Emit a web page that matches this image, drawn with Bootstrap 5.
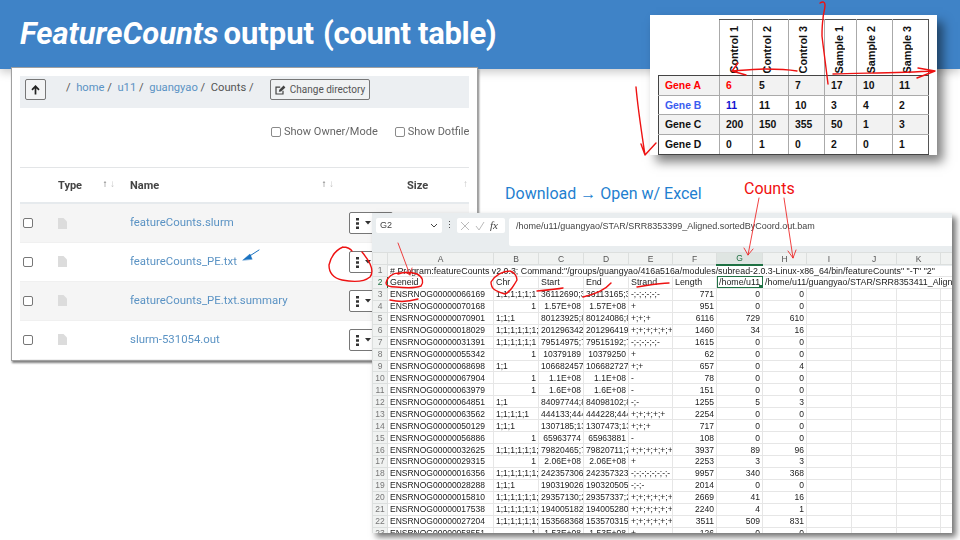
<!DOCTYPE html>
<html lang="en">
<head>
<meta charset="utf-8">
<title>FeatureCounts output</title>
<link href="https://cdn.jsdelivr.net/npm/bootstrap@5.3.0/dist/css/bootstrap.min.css" rel="stylesheet">
<style>
html,body{margin:0;background:#fff}
.slide{position:relative;width:960px;height:540px;overflow:hidden;background:#fff;font-family:"Liberation Sans",sans-serif}
.slide-head{height:69px;background:#3f83c7;box-shadow:0 3px 9px rgba(0,0,0,.22);padding:15px 0 0 20px;color:#fff;font:700 31px/38px Roboto,sans-serif;white-space:nowrap}
.slide-head em{margin-right:5px}
.slide-head span{margin-left:9px;letter-spacing:-.35px}

.files-win{position:absolute;left:11px;top:67px;width:467px;height:294px;background:#fff;border:1px solid #a0a0a0;box-shadow:1px 2px 2px #808080;padding:8px;font-family:Roboto,sans-serif;font-size:11px;color:#555;overflow:hidden}
.files-bar{height:32px;background:#eceff2;padding:3px 5px}
.up-btn{width:21px;height:21px;padding:0;border:1px solid #777;border-radius:2px;background:#f3f4f5;line-height:1}
.crumbs{margin:0 0 0 20px;padding:0;width:204px;font-size:11.2px;line-height:18px;color:#555}
.crumbs a{color:#5b93c4;text-decoration:none}
.dir-btn{width:100px;height:21px;padding:0;border:1px solid #777;border-radius:2px;background:#f0f2f3;color:#555;font-size:10px;line-height:19px;white-space:nowrap}
.opts{height:60px;padding:15px 0 0 251px;font-size:11px;line-height:18px;white-space:nowrap;overflow:hidden;border-bottom:1px solid #e3e5e7;color:#666}
.opts label{display:inline-flex;align-items:center;margin-right:17px}
.tick{width:10px;height:10px;border:1px solid #8a8a8a;border-radius:2px;background:#fff;margin:0 3px 0 0;appearance:none;flex:none;display:block}
.files-table{table-layout:fixed;width:449px;margin:0;font-size:11.4px;border-collapse:collapse}
.files-table th,.files-table td{padding:0 0 0 8px;vertical-align:middle;border:0;color:#555;box-shadow:none;background:transparent}
.files-table thead th{height:35px;padding-top:3px;border-bottom:2px solid #e6eaed;font-weight:700;font-size:11px;color:#444}
.files-table tbody tr{height:39px}
.files-table tbody tr.odd-row td{background:#f5f5f5}
.files-table tbody tr td{border-bottom:1px solid #f0f0f0}
.files-table td.tick-cell{padding-left:3px}
.files-table .tick{border:1.4px solid #777;margin:0}
.files-table a{color:#5b93c4;text-decoration:none}
.sorter{font-size:10px;line-height:1;color:#555;padding-right:7px;margin-top:-6px}
.sorter i{font-style:normal;color:#c4c4c4}
.size-sort{padding-right:1px}
.kebab{width:44px;height:22px;margin-top:1px;padding:0 0 0 6px;border:1px solid #777;border-radius:2px;background:#fff;display:flex;align-items:center;gap:6px;line-height:1}
.head-wrap{display:flex;justify-content:space-between;align-items:center}

.gene-win{position:absolute;left:650px;top:15px;width:287px;height:140px;background:#fff;box-shadow:6px 7px 10px rgba(0,0,0,.5);padding:4px 0 0 8px}
.gene-table{table-layout:fixed;width:270px;border-collapse:collapse;font:700 10.4px "Liberation Sans",sans-serif;color:#111}
.gene-table td,.gene-table th{border:1px solid #aaa;padding:0 0 0 6px;height:19.7px;vertical-align:middle;white-space:nowrap}
.gene-table th.rot{height:56px;padding:0;font-size:10.8px;font-weight:700;text-align:left;vertical-align:bottom;border-top:1px solid #555;border-bottom:1px solid #444}
.gene-table th.rot span{display:block;writing-mode:vertical-rl;transform:rotate(180deg);margin:0 0 2px 8px;text-align:left}
.gene-table tbody td:first-child{border-left:1px solid #444;padding-left:6px}
.gene-table tbody td:nth-child(2),.gene-table tbody td:nth-child(5){border-left:1px solid #444}
.gene-table tbody td:last-child,.gene-table th.rot:last-child{border-right:1px solid #555}
.gene-table th.rot:first-of-type,.gene-table th.rot.mid{border-left:1px solid #444}
.gene-table th.blank{border:0;border-bottom:1px solid #444}
.gene-table tbody tr:last-child td{border-bottom:1px solid #444}
.gene-table tr.shade td{background:#f2f2f2}
.gene-table .t-red{color:#f00}.gene-table .t-blue{color:#3a5cf0}.gene-table .t-navy{color:#1010d0}

.cap-dl{position:absolute;left:505px;top:184px;font:16px/19px Roboto,sans-serif;color:#1f7fd0;white-space:nowrap}
.cap-ct{position:absolute;left:744px;top:179px;font:16px/19px Roboto,sans-serif;color:#f01010;white-space:nowrap}

.sheet-win{position:absolute;left:372px;top:213px;width:580px;height:320px;background:#e9edef;box-shadow:4px 4px 6px rgba(0,0,0,.55);overflow:hidden}
.fx-row{height:39px;padding:5px 0 0 4px;align-items:flex-start}
.name-box{width:66px;height:15px;background:#fff;border-radius:2px;font-size:9px;line-height:15px;padding:0 4px;color:#444}
.fx-dots{width:15px;text-align:center;font-size:8.5px;line-height:14px;color:#444}
.fx-btns{width:48px;height:15px;background:#fff;border-radius:2px;margin-right:4px;padding:0 3px;gap:5px}
.fx-btns em{font:italic 11px/15px "Liberation Serif",serif;color:#444}
.fx-input{flex:1;height:28px;background:#fff;font-size:9px;line-height:14px;padding:1px 7px;color:#444;white-space:nowrap;border-radius:2px 0 0 2px}
.sheet{table-layout:fixed;width:580px;border-collapse:collapse;font-size:8.5px;color:#222}
.sheet td,.sheet th{border:1px solid #e6e6e6;padding:0 2px;height:11.95px;line-height:10px;overflow:hidden;white-space:nowrap;font-weight:400;background:#fff;color:#222}
.sheet thead th{height:12px;background:#f0f2f1;text-align:center;color:#555;border-color:#dcdfde}
.sheet thead th.on{background:#dfe5e2;color:#1f6e43;border-bottom:2px solid #1f7244}
.sheet tbody th{background:#f0f2f1;text-align:center;color:#777;padding:0;border-color:#dcdfde}
.sheet tbody th.on{color:#1f7244;border-right:1px solid #1f7244}
.sheet .num{text-align:right}
.sheet .wide-txt{font-size:8.85px}
.sheet td.sel{outline:1px solid #1f7244;outline-offset:-1px;position:relative}
.sheet td.sel::after{content:"";position:absolute;right:0;bottom:0;width:3px;height:3px;background:#1f7244}
.ink{position:absolute;left:0;top:0;width:960px;height:540px;pointer-events:none}
.ink path{fill:none;stroke:#ee1212;stroke-linecap:round;stroke-linejoin:round}
.soft{filter:blur(.35px)}
</style>
</head>
<body>
<div class="slide">
  <div class="slide-head"><em>FeatureCounts</em>output<span>(count table)</span></div>

  <section class="files-win soft">
    <div class="files-bar d-flex align-items-start">
      <button class="up-btn d-flex align-items-center justify-content-center" type="button" aria-label="Up"><svg width="9" height="10" viewBox="0 0 9 10"><path d="M4.5 9.5V1.5M1 4.8 4.5 1.2 8 4.8" fill="none" stroke="#222" stroke-width="1.7"/></svg></button>
      <p class="crumbs">/&nbsp; <a href="#">home</a> /&nbsp; <a href="#">u11</a> /&nbsp; <a href="#">guangyao</a> /&nbsp; Counts /</p>
      <button class="dir-btn d-flex align-items-center justify-content-center gap-1" type="button"><svg width="11" height="10" viewBox="0 0 11 10"><path d="M8 5.8V9H1V2.2h4.2" fill="none" stroke="#444" stroke-width="1.2"/><path d="M3.8 6.7 4.3 4.7 8.6.6l1.8 1.8-4.3 4z" fill="#444"/></svg>Change directory</button>
    </div>
    <div class="opts">
      <label><input class="tick" type="checkbox">Show Owner/Mode</label><label><input class="tick" type="checkbox">Show Dotfile</label>
    </div>
    <table class="table files-table">
      <colgroup><col style="width:30px"><col style="width:72px"><col style="width:219px"><col style="width:58px"><col style="width:70px"></colgroup>
      <thead>
        <tr><th></th><th><div class="head-wrap">Type<span class="sorter">↑ <i>↓</i></span></div></th><th><div class="head-wrap">Name<span class="sorter">↑ <i>↓</i></span></div></th><th></th><th><div class="head-wrap">Size<span class="sorter size-sort"><i>↑</i></span></div></th></tr>
      </thead>
      <tbody>
        <tr class="odd-row"><td class="tick-cell"><input class="tick" type="checkbox"></td><td><svg width="9" height="11" viewBox="0 0 9 11"><path d="M0 0h5.5L9 3.5V11H0z" fill="#dcdcdc"/></svg></td><td><a href="#">featureCounts.slurm</a></td><td><div class="kebab"><svg width="3" height="11" viewBox="0 0 3 11"><path d="M0 0h3v2.6H0zM0 4.2h3v2.6H0zM0 8.4h3V11H0z" fill="#333"/></svg><svg width="6" height="4" viewBox="0 0 6 4"><path d="M0 0h6L3 3.5z" fill="#333"/></svg></div></td><td></td></tr>
        <tr><td class="tick-cell"><input class="tick" type="checkbox"></td><td><svg width="9" height="11" viewBox="0 0 9 11"><path d="M0 0h5.5L9 3.5V11H0z" fill="#dcdcdc"/></svg></td><td><a href="#">featureCounts_PE.txt</a></td><td><div class="kebab"><svg width="3" height="11" viewBox="0 0 3 11"><path d="M0 0h3v2.6H0zM0 4.2h3v2.6H0zM0 8.4h3V11H0z" fill="#333"/></svg><svg width="6" height="4" viewBox="0 0 6 4"><path d="M0 0h6L3 3.5z" fill="#333"/></svg></div></td><td></td></tr>
        <tr class="odd-row"><td class="tick-cell"><input class="tick" type="checkbox"></td><td><svg width="9" height="11" viewBox="0 0 9 11"><path d="M0 0h5.5L9 3.5V11H0z" fill="#dcdcdc"/></svg></td><td><a href="#">featureCounts_PE.txt.summary</a></td><td><div class="kebab"><svg width="3" height="11" viewBox="0 0 3 11"><path d="M0 0h3v2.6H0zM0 4.2h3v2.6H0zM0 8.4h3V11H0z" fill="#333"/></svg><svg width="6" height="4" viewBox="0 0 6 4"><path d="M0 0h6L3 3.5z" fill="#333"/></svg></div></td><td></td></tr>
        <tr><td class="tick-cell"><input class="tick" type="checkbox"></td><td><svg width="9" height="11" viewBox="0 0 9 11"><path d="M0 0h5.5L9 3.5V11H0z" fill="#dcdcdc"/></svg></td><td><a href="#">slurm-531054.out</a></td><td><div class="kebab"><svg width="3" height="11" viewBox="0 0 3 11"><path d="M0 0h3v2.6H0zM0 4.2h3v2.6H0zM0 8.4h3V11H0z" fill="#333"/></svg><svg width="6" height="4" viewBox="0 0 6 4"><path d="M0 0h6L3 3.5z" fill="#333"/></svg></div></td><td></td></tr>
      </tbody>
    </table>
  </section>

  <section class="gene-win">
    <table class="gene-table">
      <colgroup><col style="width:61px"><col style="width:33px"><col style="width:36px"><col style="width:36px"><col style="width:32px"><col style="width:36px"><col style="width:36px"></colgroup>
      <thead><tr><th class="blank"></th><th class="rot"><span>Control 1</span></th><th class="rot"><span>Control 2</span></th><th class="rot"><span>Control 3</span></th><th class="rot mid"><span>Sample 1</span></th><th class="rot"><span>Sample 2</span></th><th class="rot"><span>Sample 3</span></th></tr></thead>
      <tbody>
        <tr class="shade"><td class="t-red">Gene A</td><td class="t-red">6</td><td>5</td><td>7</td><td>17</td><td>10</td><td>11</td></tr>
        <tr><td class="t-blue">Gene B</td><td class="t-navy">11</td><td>11</td><td>10</td><td>3</td><td>4</td><td>2</td></tr>
        <tr class="shade"><td>Gene C</td><td>200</td><td>150</td><td>355</td><td>50</td><td>1</td><td>3</td></tr>
        <tr><td>Gene D</td><td>0</td><td>1</td><td>0</td><td>2</td><td>0</td><td>1</td></tr>
      </tbody>
    </table>
  </section>

  <div class="cap-dl">Download → Open w/ Excel</div>
  <div class="cap-ct">Counts</div>

  <section class="sheet-win soft">
    <div class="fx-row d-flex">
      <div class="name-box d-flex justify-content-between align-items-center">G2<svg width="8" height="5" viewBox="0 0 8 5"><path d="M1 1l3 3 3-3" fill="none" stroke="#444"/></svg></div>
      <div class="fx-dots">⋮</div>
      <div class="fx-btns d-flex align-items-center"><svg width="10" height="10" viewBox="0 0 10 10"><path d="M1 1l8 8M9 1l-8 8" stroke="#bbb" fill="none"/></svg><svg width="10" height="10" viewBox="0 0 10 10"><path d="M1 5l3 4 5-8" stroke="#bbb" fill="none"/></svg><em>fx</em></div>
      <div class="fx-input">/home/u11/guangyao/STAR/SRR8353399_Aligned.sortedByCoord.out.bam</div>
    </div>
    <table class="sheet">
      <colgroup><col style="width:15px"><col style="width:106px"><col style="width:45px"><col style="width:45px"><col style="width:45px"><col style="width:44px"><col style="width:44px"><col style="width:46px"><col style="width:44px"><col style="width:45px"><col style="width:45px"><col style="width:44px"><col style="width:12px"></colgroup>
      <thead><tr><th></th><th>A</th><th>B</th><th>C</th><th>D</th><th>E</th><th>F</th><th class="on">G</th><th>H</th><th>I</th><th>J</th><th>K</th><th></th></tr></thead>
      <tbody>
        <tr><th>1</th><td colspan="12" class="wide-txt"># Program:featureCounts v2.0.3; Command:"/groups/guangyao/416a516a/modules/subread-2.0.3-Linux-x86_64/bin/featureCounts" "-T" "2"</td></tr>
        <tr><th class="on">2</th><td class="wide-txt">Geneid</td><td class="wide-txt">Chr</td><td class="wide-txt">Start</td><td class="wide-txt">End</td><td class="wide-txt">Strand</td><td class="wide-txt">Length</td><td class="sel wide-txt">/home/u11</td><td colspan="5" class="wide-txt">/home/u11/guangyao/STAR/SRR8353411_Align</td></tr>
        <tr><th>3</th><td>ENSRNOG00000066169</td><td>1;1;1;1;1;1</td><td>36112690;3</td><td>36113165;3</td><td>-;-;-;-;-;-</td><td class="num">771</td><td class="num">0</td><td class="num">0</td><td></td><td></td><td></td><td></td></tr>
        <tr><th>4</th><td>ENSRNOG00000070168</td><td class="num">1</td><td class="num">1.57E+08</td><td class="num">1.57E+08</td><td>+</td><td class="num">951</td><td class="num">0</td><td class="num">0</td><td></td><td></td><td></td><td></td></tr>
        <tr><th>5</th><td>ENSRNOG00000070901</td><td>1;1;1</td><td>80123925;8</td><td>80124086;8</td><td>+;+;+</td><td class="num">6116</td><td class="num">729</td><td class="num">610</td><td></td><td></td><td></td><td></td></tr>
        <tr><th>6</th><td>ENSRNOG00000018029</td><td>1;1;1;1;1;1;</td><td>201296342</td><td>201296419</td><td>+;+;+;+;+;+;</td><td class="num">1460</td><td class="num">34</td><td class="num">16</td><td></td><td></td><td></td><td></td></tr>
        <tr><th>7</th><td>ENSRNOG00000031391</td><td>1;1;1;1;1;1</td><td>79514975;7</td><td>79515192;7</td><td>-;-;-;-;-;-</td><td class="num">1615</td><td class="num">0</td><td class="num">0</td><td></td><td></td><td></td><td></td></tr>
        <tr><th>8</th><td>ENSRNOG00000055342</td><td class="num">1</td><td class="num">10379189</td><td class="num">10379250</td><td>+</td><td class="num">62</td><td class="num">0</td><td class="num">0</td><td></td><td></td><td></td><td></td></tr>
        <tr><th>9</th><td>ENSRNOG00000068698</td><td>1;1</td><td>106682457</td><td>106682727</td><td>+;+</td><td class="num">657</td><td class="num">0</td><td class="num">4</td><td></td><td></td><td></td><td></td></tr>
        <tr><th>10</th><td>ENSRNOG00000067904</td><td class="num">1</td><td class="num">1.1E+08</td><td class="num">1.1E+08</td><td>-</td><td class="num">78</td><td class="num">0</td><td class="num">0</td><td></td><td></td><td></td><td></td></tr>
        <tr><th>11</th><td>ENSRNOG00000063979</td><td class="num">1</td><td class="num">1.6E+08</td><td class="num">1.6E+08</td><td>-</td><td class="num">151</td><td class="num">0</td><td class="num">0</td><td></td><td></td><td></td><td></td></tr>
        <tr><th>12</th><td>ENSRNOG00000064851</td><td>1;1</td><td>84097744;8</td><td>84098102;8</td><td>-;-</td><td class="num">1255</td><td class="num">5</td><td class="num">3</td><td></td><td></td><td></td><td></td></tr>
        <tr><th>13</th><td>ENSRNOG00000063562</td><td>1;1;1;1;1</td><td>444133;444</td><td>444228;444</td><td>+;+;+;+;+</td><td class="num">2254</td><td class="num">0</td><td class="num">0</td><td></td><td></td><td></td><td></td></tr>
        <tr><th>14</th><td>ENSRNOG00000050129</td><td>1;1;1</td><td>1307185;13</td><td>1307473;13</td><td>+;+;+</td><td class="num">717</td><td class="num">0</td><td class="num">0</td><td></td><td></td><td></td><td></td></tr>
        <tr><th>15</th><td>ENSRNOG00000056886</td><td class="num">1</td><td class="num">65963774</td><td class="num">65963881</td><td>-</td><td class="num">108</td><td class="num">0</td><td class="num">0</td><td></td><td></td><td></td><td></td></tr>
        <tr><th>16</th><td>ENSRNOG00000032625</td><td>1;1;1;1;1;1;</td><td>79820465;7</td><td>79820711;7</td><td>+;+;+;+;+;+;</td><td class="num">3937</td><td class="num">89</td><td class="num">96</td><td></td><td></td><td></td><td></td></tr>
        <tr><th>17</th><td>ENSRNOG00000029315</td><td class="num">1</td><td class="num">2.06E+08</td><td class="num">2.06E+08</td><td>+</td><td class="num">2253</td><td class="num">3</td><td class="num">3</td><td></td><td></td><td></td><td></td></tr>
        <tr><th>18</th><td>ENSRNOG00000016356</td><td>1;1;1;1;1;1;</td><td>242357306</td><td>242357323</td><td>-;-;-;-;-;-;-;-</td><td class="num">9957</td><td class="num">340</td><td class="num">368</td><td></td><td></td><td></td><td></td></tr>
        <tr><th>19</th><td>ENSRNOG00000028288</td><td>1;1;1</td><td>190319026</td><td>190320505</td><td>-;-;-</td><td class="num">2014</td><td class="num">0</td><td class="num">0</td><td></td><td></td><td></td><td></td></tr>
        <tr><th>20</th><td>ENSRNOG00000015810</td><td>1;1;1;1;1;1;</td><td>29357130;2</td><td>29357337;2</td><td>+;+;+;+;+;+;</td><td class="num">2669</td><td class="num">41</td><td class="num">16</td><td></td><td></td><td></td><td></td></tr>
        <tr><th>21</th><td>ENSRNOG00000017538</td><td>1;1;1;1;1;1;</td><td>194005182</td><td>194005280</td><td>+;+;+;+;+;+;</td><td class="num">2240</td><td class="num">4</td><td class="num">1</td><td></td><td></td><td></td><td></td></tr>
        <tr><th>22</th><td>ENSRNOG00000027204</td><td>1;1;1;1;1;1;</td><td>153568368</td><td>153570315</td><td>+;+;+;+;+;+;</td><td class="num">3511</td><td class="num">509</td><td class="num">831</td><td></td><td></td><td></td><td></td></tr>
        <tr><th>23</th><td>ENSRNOG00000058551</td><td class="num">1</td><td class="num">1.53E+08</td><td class="num">1.53E+08</td><td>+</td><td class="num">126</td><td class="num">0</td><td class="num">0</td><td></td><td></td><td></td><td></td></tr>
      </tbody>
    </table>
  </section>

  <svg class="ink" viewBox="0 0 960 540" aria-hidden="true">
    <g stroke-width="1.4">
      <path d="M820 3C823 1 825 2 825 5C825 10 823 14 823 19C822 25 822 30 822 36C823 45 824 52 825 60C826 68 827 76 828 84"/>
      <path d="M797 71C785 69 775 69 765 69C755 69 745 70 733 71M738 63 732 71 746 75"/>
      <path d="M833 74C860 73 895 73 935 71M918 68 935 71 917 78"/>
      <path d="M636 87C638 110 642 135 645 155M641 144 645 155 656 143"/>
      <path d="M343 247C336 250 331 256 329 265C329 273 333 278 342 280C352 282 364 282 370 277C374 272 372 264 362 252M343 247C347 247 351 249 352 251"/>
      <path d="M401 273C392 272 387 278 386 283C386 286 390 287 396 287C405 288 416 288 421 286C424 282 423 277 417 274C410 272 404 272 398 274"/>
      <path d="M390 300C398 302 408 302 418 299"/>
      <path d="M510 271C503 271 495 275 491 282C491 289 495 291 505 294C510 292 513 287 517 280C517 276 514 272 510 271"/>
      <path d="M537 291C548 290 558 289 563 288"/>
      <path d="M583 297C596 294 605 290 611 283"/>
      <path d="M637 287C650 285 660 283 669 283"/>
    </g>
    <g stroke-width=".8">
      <path d="M398 243 410 275M405 272 410 275 412 268" />
      <path d="M759 198 748 255M744 248 748 255 753 249"/>
      <path d="M784 198 793 258M788 251 793 258 796 250"/>
    </g>
    <path d="M259 250 245 259" style="stroke:#1a72c0;stroke-width:1"/>
    <path d="M243 260 250 254 252 259z" style="stroke:#1a72c0;fill:#1a72c0;stroke-width:.5"/>
  </svg>
</div>
<script src="https://cdn.jsdelivr.net/npm/bootstrap@5.3.0/dist/js/bootstrap.bundle.min.js"></script>
</body>
</html>
